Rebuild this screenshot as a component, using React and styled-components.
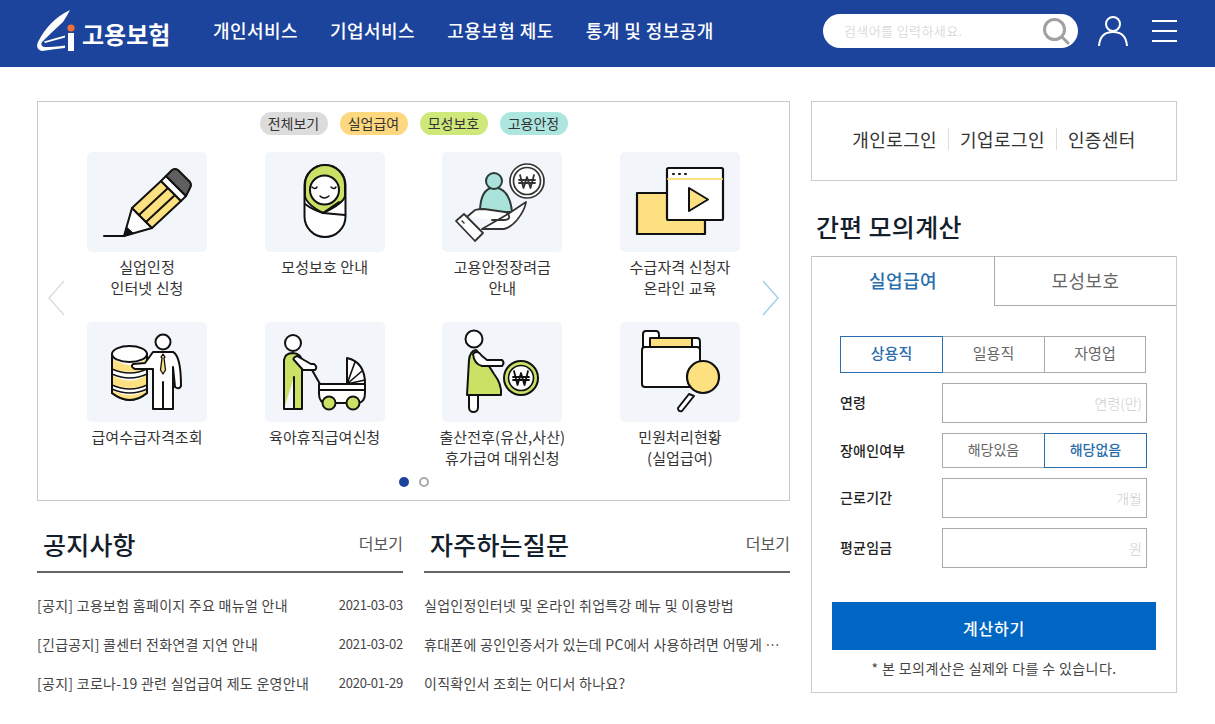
import React from "react";
import styled, { createGlobalStyle } from "styled-components";

const Global = createGlobalStyle`
  html, body { margin: 0; padding: 0; background: #fff; overflow: hidden; }
  * { box-sizing: border-box; }
  body { font-family: "Noto Sans CJK KR", "Noto Sans", sans-serif; color: #333; }
  input::placeholder { color: #ccc; opacity: 1; }
`;

const Header = styled.header`
  height: 67px; background: #1c449c; display: flex; align-items: center; padding: 0 38px 0 37px; color: #fff;
`;
const Logo = styled.a`display: flex; align-items: center; gap: 6px; width: 176px; padding-bottom: 6px;`;
const LogoText = styled.span`font-size: 24px; font-weight: 700; letter-spacing: 0; line-height: 30px; padding-top: 6px;`;
const Nav = styled.nav`display: flex; gap: 32px; flex: 1; padding-bottom: 8px;`;
const NavItem = styled.a`font-size: 18px; font-weight: 500; line-height: 26px; white-space: nowrap; letter-spacing: 0.45px;`;
const Search = styled.div`
  width: 255px; height: 34px; border-radius: 17px; background: #fff; display: flex; align-items: center;
  justify-content: space-between; padding: 0 8px 0 21px; margin-bottom: 6px;
`;
const SearchInput = styled.input`border: 0; outline: 0; font: 300 13px "Noto Sans CJK KR", sans-serif; letter-spacing: 0.4px; width: 180px; padding: 0; background: none;`;
const UserBtn = styled.div`margin: 0 24px 6px 20px; height: 34px;`;
const MenuBtn = styled.div`
  width: 25px; height: 22px; display: flex; flex-direction: column; justify-content: space-between; margin-bottom: 6px;
  span { display: block; height: 2px; background: #fff; }
`;

const Main = styled.main`
  display: grid; grid-template-columns: 753px 366px; column-gap: 21px; padding: 34px 38px 0 37px;
`;
const Left = styled.div`display: flex; flex-direction: column;`;
const Right = styled.aside`display: flex; flex-direction: column;`;

const Slider = styled.section`
  position: relative; height: 400px; border: 1px solid #c8c8c8; padding-top: 10px;
  display: flex; flex-direction: column; align-items: center;
`;
const Pills = styled.div`display: flex; gap: 12px;`;
const Pill = styled.a`
  width: 68px; height: 23px; border-radius: 12px; background: ${p => p.$bg}; color: #333;
  font-size: 14px; line-height: 22px; text-align: center; letter-spacing: 0; white-space: nowrap;
`;
const IconGrid = styled.div`
  margin-top: 17px; display: grid; grid-template-columns: repeat(4, 120px); grid-auto-rows: 146px;
  column-gap: 57.67px; row-gap: 24px; justify-content: center;
`;
const Item = styled.a`display: flex; flex-direction: column; align-items: center; text-align: center;`;
const IconCard = styled.div`
  width: 120px; height: 100px; background: #f2f6fa; border-radius: 5px; svg { display: block; }
`;
const ItemLabel = styled.div`
  margin-top: 4px; width: 170px; font-size: 15px; line-height: 21px; color: #333; letter-spacing: 0.1px; white-space: pre-line;
`;
const Dots = styled.div`margin-top: 9px; display: flex; gap: 10px; position: relative; left: 0.5px;`;
const Dot = styled.i`
  display: block; width: 10px; height: 10px; border-radius: 50%;
  background: ${p => (p.$on ? "#1c449c" : "#fff")}; border: ${p => (p.$on ? "0" : "2px solid #aaa")};
`;
const Arrow = styled.svg`position: absolute; top: 178px; ${p => (p.$side === "left" ? "left: 10px;" : "right: 10px;")}`;

const Boards = styled.div`display: grid; grid-template-columns: 366px 366px; column-gap: 21px; margin-top: 22px;`;
const Board = styled.section`min-width: 0;`;
const BoardHead = styled.div`
  height: 50px; border-bottom: 2px solid #666; display: flex; justify-content: space-between; align-items: flex-start; padding-left: 6px;
`;
const BoardTitle = styled.h2`margin: 0; font-size: 25px; font-weight: 500; line-height: 42px; color: #13202c; letter-spacing: 0.2px;`;
const More = styled.a`font-size: 16px; line-height: 40px; color: #555;`;
const BoardList = styled.ul`margin: 12px 0 0; padding: 0; list-style: none;`;
const Row = styled.li`height: 39px; display: flex; align-items: center; justify-content: space-between; gap: 10px; font-size: 14px; color: #444;`;
const RowText = styled.span`overflow: hidden; white-space: nowrap; text-overflow: ellipsis; letter-spacing: 0.28px;`;
const RowDate = styled.span`font-size: 13px; color: #444; flex: none; letter-spacing: -0.25px;`;

const LoginBox = styled.div`
  height: 80px; border: 1px solid #ccc; display: flex; align-items: center; justify-content: center; padding-bottom: 5px;
`;
const LoginLink = styled.a`
  font-size: 18px; color: #333; line-height: 22px; padding: 0 11px; white-space: nowrap; letter-spacing: 0.4px;
  & + & { border-left: 1px solid #ddd; }
`;
const CalcTitle = styled.h2`margin: 27px 0 0 5px; font-size: 25px; font-weight: 500; line-height: 36px; height: 48px; color: #13202c; letter-spacing: 0.3px;`;
const Calc = styled.div`height: 437px; border: 1px solid #ccc; border-top: 0; position: relative;`;
const Tabs = styled.div`display: grid; grid-template-columns: 182px 182px; height: 50px;`;
const Tab = styled.a`
  display: block; text-align: center; font-size: 18px; line-height: 46px; border-top: 1px solid #bbb; letter-spacing: 0.4px;
  color: ${p => (p.$on ? "#2a6ead" : "#666")}; font-weight: ${p => (p.$on ? 500 : 400)};
  ${p => (p.$on ? "" : "border-left: 1px solid #aaa; border-bottom: 1px solid #aaa;")}
`;
const CalcBody = styled.div`padding: 30px 20px 0 20px;`;
const Fields = styled.div`display: flex; flex-direction: column; gap: 10px; padding: 0 8px;`;
const FieldRow = styled.div`display: grid; grid-template-columns: 102px 205px; margin-right: -2px; align-items: center;`;
const FieldLabel = styled.label`font-size: 14px; font-weight: 500; color: #222; letter-spacing: 0.2px; padding-bottom: 2px;`;
const Input = styled.input`
  height: 40px; width: 205px; border: 1px solid #aaa; outline: 0; text-align: right; padding: 0 4px;
  font: 300 14px "Noto Sans CJK KR", sans-serif; color: #333; background: #fff;
`;
const Seg = styled.div`display: grid; grid-template-columns: ${p => p.$cols}; height: ${p => p.$h}px;`;
const SegBtn = styled.a`
  display: block; text-align: center; font-size: ${p => p.$fs}px; line-height: ${p => p.$h - 5}px;
  border: 1px solid ${p => (p.$on ? "#2a6ead" : "#aaa")}; color: ${p => (p.$on ? "#2a6ead" : "#666")};
  font-weight: ${p => (p.$on ? 500 : 400)}; margin-left: -1px; position: relative; z-index: ${p => (p.$on ? 1 : 0)};
  &:first-child { margin-left: 0; }
`;
const CalcButton = styled.button`
  display: block; width: 324px; height: 48px; margin-top: 34px; border: 0; background: #0066c3; color: #fff; padding: 3px 0 0;
  font: 500 16px "Noto Sans CJK KR", sans-serif; letter-spacing: 0.8px;
`;
const Note = styled.p`margin: 8px 0 0; text-align: center; font-size: 14px; line-height: 20px; color: #444; letter-spacing: 0.4px;`;

const S = { stroke: "#111", strokeWidth: 2, strokeLinejoin: "round", strokeLinecap: "round" };
const Y = "#fde07f", G = "#c9e265", T = "#a9e3da", W = "#fff";
const Svg = ({ children }) => <svg width="120" height="100" viewBox="0 0 120 100" fill="none" {...S}>{children}</svg>;

const Pencil = () => <Svg>
  <path d="M17 84H37" />
  <path d="M37 84L45 56L65 76Z" fill={W} />
  <path d="M37 84L39.5 75L46 81Z" fill="#111" strokeWidth="1" />
  <path d="M45 56L74 29L94 49L65 76Z" fill={Y} />
  <path d="M52 63L81 36M59 70L88 43" />
  <path d="M74 29L79 24L99 44L94 49Z" fill={W} />
  <path d="M79 24L85 18Q88 16 91 18L103 30Q105 33 103 36L99 44Z" fill="#5f5f5f" />
</Svg>;
const Baby = () => <Svg>
  <rect x="39.5" y="13" width="41" height="72" rx="20.5" fill={W} />
  <path d="M40 44V33a20 20 0 0 1 40 0v11q-1 7-22 17Q41 52 40 44Z" fill={G} />
  <circle cx="59.5" cy="38" r="14.5" fill={W} />
  <path d="M47 35q3 3 5 0M66 35q3 3 5 0M55 44q4 4 9 0" strokeWidth="1.5" />
  <path d="M40 52Q48 58 58 61L80 63M58 61L74 50" />
</Svg>;
const HandWon = () => <Svg>
  <path d="M38 60Q38 37 52 35Q68 37 70 60Z" fill={T} stroke="#2c3a38" />
  <circle cx="52" cy="29" r="8" fill={T} stroke="#2c3a38" />
  <circle cx="85" cy="29" r="17" fill={W} stroke="#333" strokeWidth="1.7" /><circle cx="85" cy="29" r="13.5" fill={W} stroke="#333" strokeWidth="1.7" />
  <path d="M78 23L81.5 36L85 25L88.5 36L92 23M77 28H93M77 31H93" stroke="#333" strokeWidth="1.8" />
  <path d="M26 64L33 58Q36 57 42 57L63 60Q68 62 67 66Q66 68 62 68H50M66 62L78 54L84 50Q83 58 75 68Q68 76 62 77H40Z" fill={W} stroke="#333" strokeWidth="1.8" />
  <path d="M14 69L22 62L41 81L33 89Z" fill={W} stroke="#333" strokeWidth="1.8" />
  <path d="M20 69l2 2" stroke="#333" strokeWidth="1.5" />
</Svg>;
const Video = () => <Svg>
  <rect x="17" y="41" width="68" height="41" fill={Y} strokeWidth="2.2" />
  <rect x="47" y="16" width="56" height="52" rx="1.5" fill={W} strokeWidth="2.2" />
  <path d="M48 27H102" stroke={Y} />
  <path d="M53 22h1M59 22h1M65 22h1" />
  <path d="M69 36L88 47.5L69 59Z" fill={Y} />
</Svg>;
const DbMan = () => <Svg>
  <path d="M25 32V71Q43 85 60 71V32Z" fill={W} />
  <path d="M25 36Q43 50 60 36V47Q43 53 25 47Z" fill={Y} stroke="none" />
  <path d="M25 53Q43 64 60 53V63Q43 69 25 63Z" fill={Y} stroke="none" />
  <path d="M25 68Q43 78 60 68V71Q43 85 25 71Z" fill={Y} stroke="none" />
  <path d="M25 32V71Q43 85 60 71V32" />
  <ellipse cx="42.5" cy="32" rx="17.5" ry="8" fill={W} />
  <path d="M25 47Q43 55 60 47M25 52Q43 60 60 52M25 63Q43 71 60 63M25 67Q43 75 60 67" strokeWidth="1.4" />
  <circle cx="76" cy="20" r="7.5" fill={W} />
  <path d="M66 87V47H48Q43 45 46 42L58 41L66 30H86Q94 34 94 64Q92 68 88 65L86 45V87Z" fill={W} />
  <path d="M76 60V87" />
  <path d="M76 32l-2 3l1 1l-1.5 12l2.5 4l2.5-4l-1.5-12l1-1z" fill={Y} strokeWidth="1.3" />
</Svg>;
const Stroller = () => <Svg>
  <circle cx="28" cy="21" r="8" fill={W} />
  <path d="M19 87V38Q20 31 28 31Q37 32 37 40V87H29V55M19 87H29" fill={G} />
  <path d="M29 38Q27 36 32 34L46 42H49Q53 45 50 48H38Z" fill={W} />
  <path d="M47 48L55 62" />
  <path d="M54 62H100V71Q100 81 92 81H62Q54 81 54 72Z" fill={W} />
  <path d="M54 68H100" />
  <path d="M82 62V36Q100 40 100 62Z" fill={W} />
  <path d="M82 62L90 40M82 62L97 49M82 62L100 58" strokeWidth="1.6" />
  <circle cx="64" cy="81" r="6.5" fill={G} /><circle cx="88" cy="81" r="6.5" fill={G} />
</Svg>;
const Pregnant = () => <Svg>
  <circle cx="32" cy="17" r="8.5" fill={W} />
  <rect x="27" y="70" width="9" height="20" rx="4.5" fill={W} />
  <path d="M25 73L27 38Q28 29 34 28Q45 40 52 52Q60 62 59 73Z" fill={G} />
  <path d="M31 32Q35 27 40 34L45 38H60Q63 41 60 44H40Q32 42 31 32Z" fill={W} />
  <circle cx="79" cy="56" r="17" fill={G} /><circle cx="79" cy="56" r="12.5" fill={W} strokeWidth="1.6" />
  <path d="M72 49L75.5 63L79 51L82.5 63L86 49M71 55H87M71 58H87" strokeWidth="1.8" />
</Svg>;
const Folder = () => <Svg>
  <path d="M23 25V12Q23 9 26 9H36Q39 9 39 13V25Z" fill={W} />
  <path d="M72 16H77Q80 16 80 20V28H72Z" fill={W} />
  <rect x="30" y="16" width="42" height="12" fill={Y} />
  <path d="M22 28Q22 25 25 25H77Q80 25 80 28V65H25Q22 65 22 62Z" fill={W} />
  <path d="M69 72L58 86Q58 90 62 89L74 74Z" fill={W} />
  <circle cx="83" cy="55" r="16" fill={Y} strokeWidth="2.2" />
</Svg>;

const items = [
  [Pencil, "실업인정\n인터넷 신청"],
  [Baby, "모성보호 안내"],
  [HandWon, "고용안정장려금\n안내"],
  [Video, "수급자격 신청자\n온라인 교육"],
  [DbMan, "급여수급자격조회"],
  [Stroller, "육아휴직급여신청"],
  [Pregnant, "출산전후(유산,사산)\n휴가급여 대위신청"],
  [Folder, "민원처리현황\n(실업급여)"],
];
const notices = [
  ["[공지] 고용보험 홈페이지 주요 매뉴얼 안내", "2021-03-03"],
  ["[긴급공지] 콜센터 전화연결 지연 안내", "2021-03-02"],
  ["[공지] 코로나-19 관련 실업급여 제도 운영안내", "2020-01-29"],
];
const faqs = [
  "실업인정인터넷 및 온라인 취업특강 메뉴 및 이용방법",
  "휴대폰에 공인인증서가 있는데 PC에서 사용하려면 어떻게 해야 하나요?",
  "이직확인서 조회는 어디서 하나요?",
];

export default function App() {
  return (
    <>
      <Global />
      <Header>
        <Logo>
          <svg width="39" height="42" viewBox="0 0 39 42">
            <path d="M33 0Q12 10 1 32Q-2 39 5 41Q18 39 28 38V35.5Q16 37 7 37Q3 36 5 32Q16 21 26 12Q30 6 33 0Z" fill="#fff" />
            <path d="M7 31.5L28 25.5V27.5L8 33Z" fill="#fff" />
            <path d="M31 23H37V41H31Z" fill="#fff" />
            <circle cx="34" cy="18" r="3.6" fill="#f0703a" />
          </svg>
          <LogoText>고용보험</LogoText>
        </Logo>
        <Nav>
          <NavItem>개인서비스</NavItem>
          <NavItem>기업서비스</NavItem>
          <NavItem>고용보험 제도</NavItem>
          <NavItem>통계 및 정보공개</NavItem>
        </Nav>
        <Search>
          <SearchInput placeholder="검색어를 입력하세요." />
          <svg width="28" height="28" viewBox="0 0 28 28" fill="none" stroke="#a0a0a0" strokeWidth="3">
            <circle cx="12.5" cy="12.5" r="10" /><path d="M20 20L26 26" strokeLinecap="round" />
          </svg>
        </Search>
        <UserBtn>
          <svg width="30" height="34" viewBox="0 0 30 34" fill="none" stroke="#fff" strokeWidth="2">
            <circle cx="15" cy="10" r="7" /><path d="M1 32Q2 18 15 18Q28 18 29 32" />
          </svg>
        </UserBtn>
        <MenuBtn><span /><span /><span /></MenuBtn>
      </Header>
      <Main>
        <Left>
          <Slider>
            <Pills>
              <Pill $bg="#dcdcdc">전체보기</Pill>
              <Pill $bg="#fdd87e">실업급여</Pill>
              <Pill $bg="#cfe87a">모성보호</Pill>
              <Pill $bg="#ade5df">고용안정</Pill>
            </Pills>
            <IconGrid>
              {items.map(([Icon, label]) => (
                <Item key={label}>
                  <IconCard><Icon /></IconCard>
                  <ItemLabel>{label}</ItemLabel>
                </Item>
              ))}
            </IconGrid>
            <Dots><Dot $on /><Dot /></Dots>
            <Arrow $side="left" width="17" height="36" viewBox="0 0 17 36" fill="none" stroke="#ddd" strokeWidth="1.5"><path d="M16 1L1 18L16 35" /></Arrow>
            <Arrow $side="right" width="17" height="36" viewBox="0 0 17 36" fill="none" stroke="#a5cfe6" strokeWidth="1.5"><path d="M1 1L16 18L1 35" /></Arrow>
          </Slider>
          <Boards>
            <Board>
              <BoardHead><BoardTitle>공지사항</BoardTitle><More>더보기</More></BoardHead>
              <BoardList>
                {notices.map(([t, d]) => <Row key={t}><RowText>{t}</RowText><RowDate>{d}</RowDate></Row>)}
              </BoardList>
            </Board>
            <Board>
              <BoardHead><BoardTitle>자주하는질문</BoardTitle><More>더보기</More></BoardHead>
              <BoardList>
                {faqs.map(t => <Row key={t}><RowText>{t}</RowText></Row>)}
              </BoardList>
            </Board>
          </Boards>
        </Left>
        <Right>
          <LoginBox>
            <LoginLink>개인로그인</LoginLink>
            <LoginLink>기업로그인</LoginLink>
            <LoginLink>인증센터</LoginLink>
          </LoginBox>
          <CalcTitle>간편 모의계산</CalcTitle>
          <Calc>
            <Tabs>
              <Tab $on>실업급여</Tab>
              <Tab>모성보호</Tab>
            </Tabs>
            <CalcBody>
              <Fields>
                <Seg $cols="103px 102px 101px" $h={37}>
                  <SegBtn $on $fs={15} $h={37}>상용직</SegBtn>
                  <SegBtn $fs={15} $h={37}>일용직</SegBtn>
                  <SegBtn $fs={15} $h={37}>자영업</SegBtn>
                </Seg>
                <FieldRow><FieldLabel>연령</FieldLabel><Input placeholder="연령(만)" /></FieldRow>
                <FieldRow>
                  <FieldLabel>장애인여부</FieldLabel>
                  <Seg $cols="103px 102px" $h={35}>
                    <SegBtn $fs={14} $h={35}>해당있음</SegBtn>
                    <SegBtn $on $fs={14} $h={35}>해당없음</SegBtn>
                  </Seg>
                </FieldRow>
                <FieldRow><FieldLabel>근로기간</FieldLabel><Input placeholder="개월" /></FieldRow>
                <FieldRow><FieldLabel>평균임금</FieldLabel><Input placeholder="원" /></FieldRow>
              </Fields>
              <CalcButton>계산하기</CalcButton>
              <Note>* 본 모의계산은 실제와 다를 수 있습니다.</Note>
            </CalcBody>
          </Calc>
        </Right>
      </Main>
    </>
  );
}
